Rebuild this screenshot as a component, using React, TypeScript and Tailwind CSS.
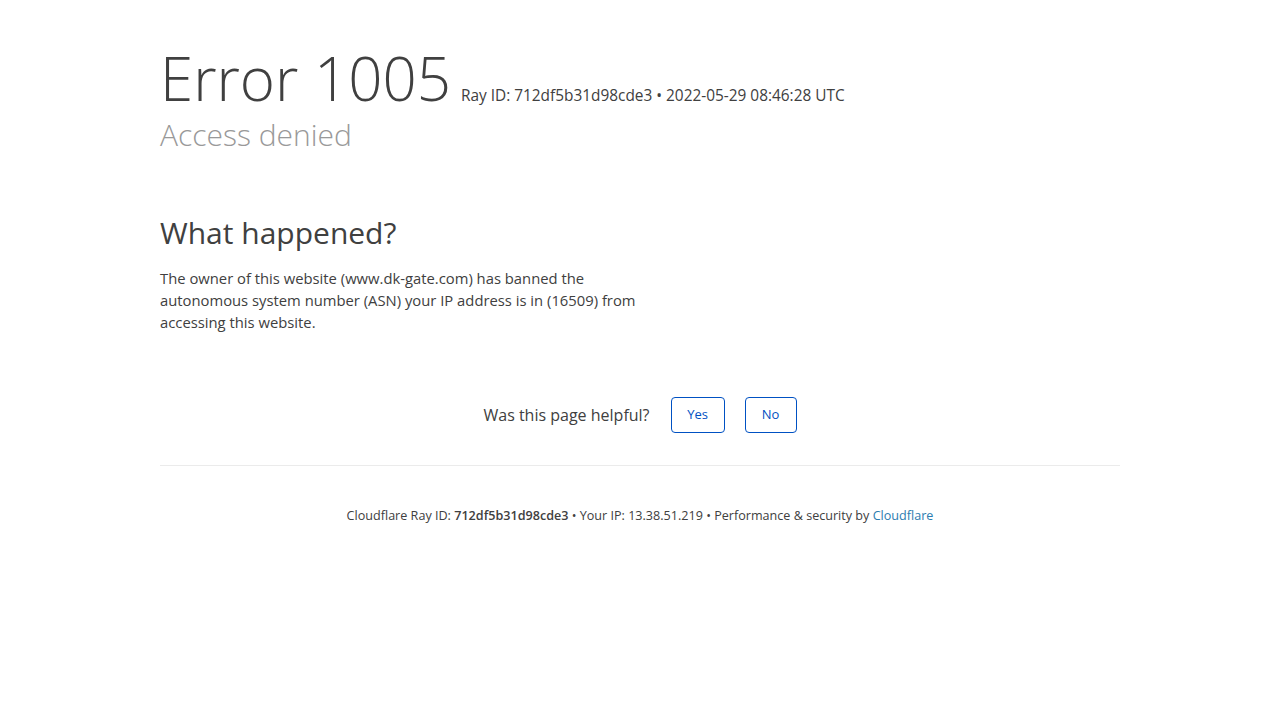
export default function App() {
  return (
    <div
      className="min-h-screen bg-white text-[#404040]"
      style={{ fontFamily: '"Open Sans", "Liberation Sans", sans-serif' }}
    >
      <div className="mx-auto w-[960px] pt-[48px]">
        <div className="flex items-baseline">
          <h1 className="text-[60px] font-light leading-[60px] text-[#404040]">Error 1005</h1>
          <span className="ml-[10px] text-[15.4px] text-[#404040]">
            Ray ID: 712df5b31d98cde3 • 2022-05-29 08:46:28 UTC
          </span>
        </div>
        <h2 className="mt-[9px] text-[30px] font-light leading-[36px] text-[#999999]">
          Access denied
        </h2>

        <section className="mt-[62px] w-[500px]">
          <h2 className="text-[30px] font-normal leading-[36px] text-[#404040]">What happened?</h2>
          <p className="mt-[16px] text-[14.8px] leading-[22px] text-[#404040]">
            The owner of this website (www.dk-gate.com) has banned the autonomous system number
            (ASN) your IP address is in (16509) from accessing this website.
          </p>
        </section>

        <div className="mt-[64px] flex items-center justify-center">
          <span className="text-[16px] text-[#404040]">Was this page helpful?</span>
          <button className="ml-[21px] h-[36px] w-[54px] rounded-[4px] border border-[#0051c3] text-[13px] text-[#0051c3]">
            Yes
          </button>
          <button className="ml-[20px] h-[36px] w-[52px] rounded-[4px] border border-[#0051c3] text-[13px] text-[#0051c3]">
            No
          </button>
        </div>

        <div className="mt-[32px] border-t border-[#ebebeb] pt-[40px] text-center text-[12.6px] leading-[20px] text-[#404040]">
          Cloudflare Ray ID: <strong className="font-semibold">712df5b31d98cde3</strong> • Your IP:
          13.38.51.219 • Performance &amp; security by{" "}
          <a className="text-[#2c7cb0]" href="#">
            Cloudflare
          </a>
        </div>
      </div>
    </div>
  );
}
